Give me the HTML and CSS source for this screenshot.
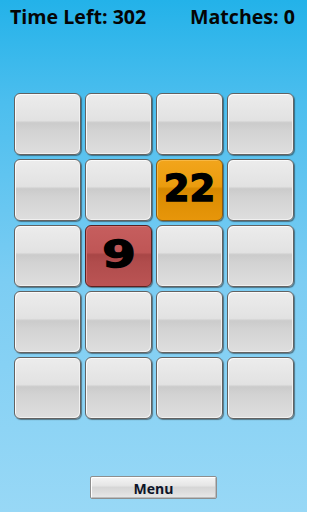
FILE: index.html
```html
<!DOCTYPE html>
<html>
<head>
<meta charset="utf-8">
<link rel="stylesheet" href="styles.css">
</head>
<body>
<div class="screen">
  <div class="header">
    <span class="stat">Time Left: 302</span>
    <span class="stat">Matches: 0</span>
  </div>
  <div class="board">
    <div class="tile"></div><div class="tile"></div><div class="tile"></div><div class="tile"></div>
    <div class="tile"></div><div class="tile"></div><div class="tile orange"><span class="num">22</span></div><div class="tile"></div>
    <div class="tile"></div><div class="tile red"><span class="num wide">9</span></div><div class="tile"></div><div class="tile"></div>
    <div class="tile"></div><div class="tile"></div><div class="tile"></div><div class="tile"></div>
    <div class="tile"></div><div class="tile"></div><div class="tile"></div><div class="tile"></div>
  </div>
  <div class="footer">
    <div class="menu">Menu</div>
  </div>
</div>
</body>
</html>
```

FILE: styles.css
```css
html, body {
  margin: 0;
  padding: 0;
}
body {
  width: 307px;
  height: 512px;
  overflow: hidden;
  font-family: "Open Sans", "Liberation Sans", sans-serif;
}
.screen {
  width: 307px;
  height: 512px;
  background: linear-gradient(to bottom, #23b2e9 0%, #4cbeee 20%, #7ccdf3 55%, #98d8f6 100%);
  display: flex;
  flex-direction: column;
}
.header {
  display: flex;
  justify-content: space-between;
  padding: 7px 12px 0 10px;
  height: 19px;
}
.stat {
  font-weight: 700;
  font-size: 19.6px;
  line-height: 20px;
  color: #050505;
}
.board {
  margin: 67px 0 0 14px;
  display: grid;
  grid-template-columns: repeat(4, 67px);
  grid-auto-rows: 62px;
  gap: 4px;
}
.tile {
  box-sizing: border-box;
  border: 1.5px solid #626262;
  border-radius: 6px;
  background: linear-gradient(to bottom, #ececec 0%, #e2e2e2 44%, #cbcbcb 48%, #d2d2d2 60%, #dedede 100%);
  box-shadow: inset 1px 1px 0 #fafafa, inset -1px -1px 0 #f0f0f0, 1px 1px 1px rgba(30,30,30,0.5);
  display: flex;
  align-items: center;
  justify-content: center;
  padding-bottom: 3px;
}
.num {
  display: inline-block;
  font-family: "DejaVu Sans", sans-serif;
  font-weight: 700;
  font-size: 37px;
  line-height: 40px;
  color: #000;
  -webkit-text-stroke: 1.4px #000;
}
.num.wide {
  transform: scaleX(1.3);
}
.tile.orange {
  border-color: #8a5a10;
  background: linear-gradient(to bottom, #f2a51c 0%, #eb9c0e 44%, #d68800 48%, #dd8d02 60%, #e7960a 100%);
  box-shadow: inset 1px 1px 0 #f7b844, 1px 1px 1px rgba(30,30,30,0.5);
}
.tile.red {
  border-color: #5a2020;
  background: linear-gradient(to bottom, #c65e5e 0%, #bf5656 44%, #a84646 48%, #b04c4c 60%, #bb5454 100%);
  box-shadow: inset 1px 1px 0 #d27272, 1px 1px 1px rgba(30,30,30,0.5);
}
.footer {
  display: flex;
  justify-content: center;
  margin-top: 57px;
}
.menu {
  box-sizing: border-box;
  width: 127px;
  height: 23px;
  border: 1.5px solid #8e8e8e;
  border-radius: 2px;
  background: linear-gradient(to bottom, #f4f4f4 0%, #e6e6e6 40%, #d6d6d6 50%, #dcdcdc 70%, #e9e9e9 100%);
  box-shadow: inset 1px 1px 0 #ffffff, inset -1px -1px 0 #bcbcbc;
  display: flex;
  align-items: center;
  justify-content: center;
  padding-top: 2px;
  font-weight: 700;
  font-size: 14px;
  color: #0e1428;
}
```
